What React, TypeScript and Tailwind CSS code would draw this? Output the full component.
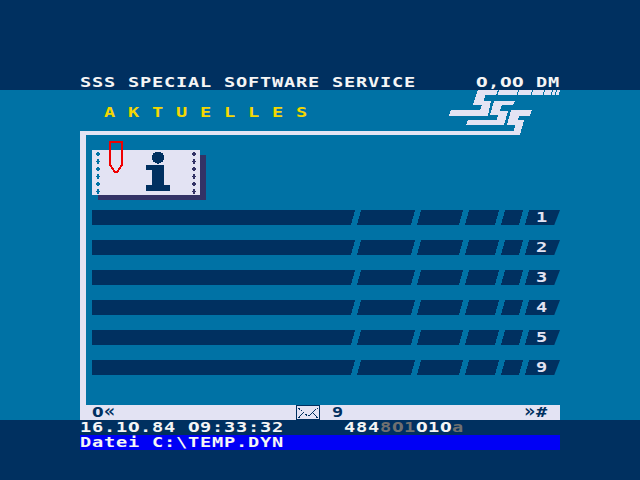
import type { ReactNode } from "react";

const FONT = "font-['DejaVu_Sans_Mono','Liberation_Mono',monospace]";

function Line({ children, className = "" }: { children: string; className?: string }) {
  const parts: ReactNode[] = children.split(/([0«»])/).map((p, i) => {
    if (p === "0") {
      return (
        <span key={i} className="font-['DejaVu_Sans_Condensed','DejaVu_Sans',sans-serif] font-bold [font-stretch:condensed] tracking-[0.26px]">0</span>
      );
    }
    if (p === "«" || p === "»") {
      return <span key={i} className="mt-px inline-block h-[10px] scale-y-[1.25] align-top leading-[10px]">{p}</span>;
    }
    return p;
  });
  return (
    <span className={`block h-[15px] w-max origin-left scale-x-[1.33] whitespace-pre text-[14px] leading-[14px] font-bold tracking-[0.594px] ${FONT} ${className}`}>
      {parts}
    </span>
  );
}

function Logo() {
  return (
    <svg width="112" height="45" viewBox="448 90 112 45" className="block" fill="#e3e3f3" shapeRendering="crispEdges">
      <path d="M478 90H498L496 95H485L484 101H491L488 116H449L451 110H480L482 105H473Z" />
      <path d="M499 90H518L517 95H498ZM519 90H532L531 95H518ZM533 90H544L543 95H532ZM545 90H552L551 95H544ZM553 90H556L555 95H552ZM557 90H560L559 95H556Z" />
      <path d="M494 101H515L513 105H502L500 111H508L504 125H466L468 120H497L498 115H490Z" />
      <path d="M511 110H532L530 116H519L518 120H524L520 135H448V131H514L515 125H507Z" />
    </svg>
  );
}

function Note() {
  const ys = [154, 161.5, 169, 176.5, 184, 191.5];
  return (
    <svg width="114" height="60" viewBox="92 141 114 60" className="block" shapeRendering="crispEdges">
      <path d="M98 155H206V200H98Z" fill="#333366" />
      <path d="M92 150H200V195H92Z" fill="#e3e3f3" />
      {ys.map((y, i) => (
        <g key={y}>
          <path d={i % 2 === 0 ? `M96 ${y - 1}h1v-1h2v1h1v2h-1v1h-2v-1h-1z` : `M96 ${y - 0.5}h1v-2h2v2h1v1h-1v2h-2v-2h-1z`} fill="#0072a5" />
          <path d={i % 2 === 0 ? `M192 ${y - 1}h1v-1h2v1h1v2h-1v1h-2v-1h-1z` : `M192 ${y - 0.5}h1v-2h2v2h1v1h-1v2h-2v-2h-1z`} fill="#333366" />
        </g>
      ))}
      <path d="M155 152h6v1h2v2h1v5h-1v2h-2v1h-2v1h-2v-1h-2v-1h-2v-2h-1v-5h1v-2h2zM146 165H164V185H170V191H146V185H152V170H146Z" fill="#003060" />
      <path d="M110 142H122V165L117 172H115L110 165Z" fill="none" stroke="#f00000" strokeWidth="2" />
    </svg>
  );
}

function Bar({ n }: { n: string }) {
  return (
    <div className="flex h-[15px] w-[468px]">
      <svg width="444" height="15" className="block shrink-0" fill="#003060" shapeRendering="crispEdges">
        <path d="M0 0H263L259 15H0ZM269 0H323L319 15H265ZM329 0H371L367 15H325ZM377 0H407L403 15H373ZM413 0H431L427 15H409ZM437 0H444V15H433Z" />
      </svg>
      <div className="h-[15px] w-6 bg-[#003060] text-[#e3e3f3] [clip-path:polygon(0_0,100%_0,76%_100%,0_100%)]">
        <Line>{n}</Line>
      </div>
    </div>
  );
}

export default function App() {
  return (
    <div className="flex h-[480px] w-[640px] flex-col overflow-hidden bg-[#003060] text-[#f5f5f5]">
      <header className="mt-[75px] flex h-[15px] justify-between px-20">
        <Line>SSS SPECIAL SOFTWARE SERVICE</Line>
        <div className="w-[84px]"><Line>0,00 DM</Line></div>
      </header>
      <main className="flex h-[330px] flex-col bg-[#0072a5] px-20">
        <div className="flex h-[45px] justify-between">
          <div className="pt-[15px] pl-6 text-[#f5d700]"><Line>A K T U E L L E S</Line></div>
          <Logo />
        </div>
        <div className="-mt-[4px] flex grow">
          <div className="w-[6px] bg-[#e3e3f3]" />
          <div className="flex grow flex-col">
            <div className="h-1 w-[433px] bg-[#e3e3f3]" />
            <div className="pt-[6px] pl-[6px]">
              <Note />
            </div>
            <div className="flex flex-col gap-[15px] pt-[9px] pl-[6px]">
              {["1", "2", "3", "4", "5", "9"].map((n) => <Bar key={n} n={n} />)}
            </div>
          </div>
        </div>
        <div className="flex h-[15px] shrink-0 bg-[#e3e3f3] pl-3 text-[#003060]">
          <div className="w-[204px]"><Line>0«</Line></div>
          <svg width="24" height="15" className="block shrink-0" fill="none" stroke="#003060" shapeRendering="crispEdges">
            <path d="M.5 .5H23.5V14.5H.5Z" />
            <path d="M2.5 3L6 6L8 8L11 10.5H14L16 8L19 5L22 3M2.5 13L6.5 8M21.5 13L17.5 8" strokeDasharray="2 1" />
          </svg>
          <div className="ml-3 w-48"><Line>9</Line></div>
          <Line>»#</Line>
        </div>
      </main>
      <footer className="px-20">
        <div className="flex h-[15px]">
          <div className="w-[264px]"><Line>16.10.84 09:33:32</Line></div>
          <div className="w-9"><Line>484</Line></div>
          <div className="w-9 text-[#707070]"><Line>801</Line></div>
          <div className="w-9"><Line>010</Line></div>
          <div className="w-3 text-[#707070]"><Line>a</Line></div>
        </div>
        <div className="h-[15px] bg-[#0000f5]"><Line>Datei C:\TEMP.DYN</Line></div>
      </footer>
    </div>
  );
}
